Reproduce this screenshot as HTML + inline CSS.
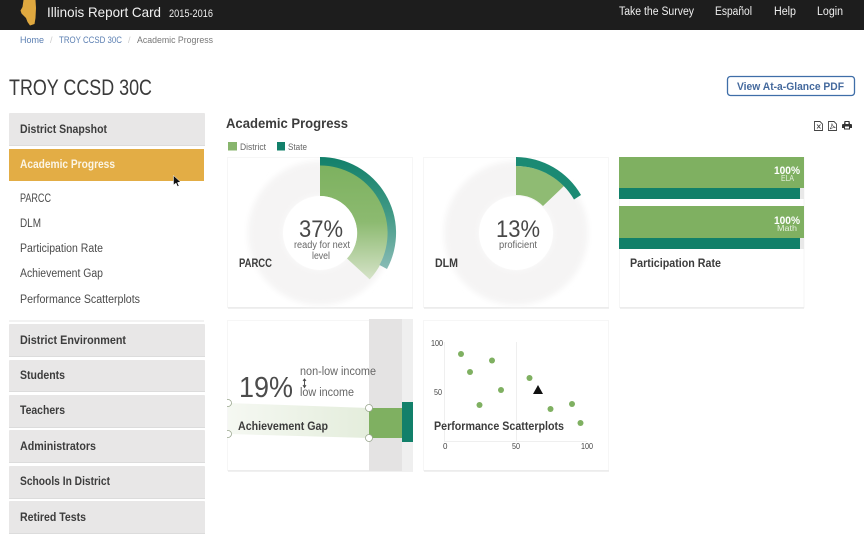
<!DOCTYPE html>
<html>
<head>
<meta charset="utf-8">
<style>
html,body{margin:0;padding:0;background:#fff;width:864px;height:540px;overflow:hidden}
svg{display:block;filter:blur(.3px)}
text{font-family:"Liberation Sans",Arial,sans-serif;fill:#444}
.b{font-weight:700;fill:#3c3c3c}
.s{font-size:11.5px;fill:#4a4a4a}
.n{font-size:11.5px;fill:#efefef}
</style>
</head>
<body>
<svg width="864" height="540" viewBox="0 0 864 540" xmlns="http://www.w3.org/2000/svg">
<defs>
<linearGradient id="g1" gradientUnits="userSpaceOnUse" x1="0" y1="165" x2="0" y2="278"><stop offset="0" stop-color="#7db15f"/><stop offset=".5" stop-color="#8cba70"/><stop offset="1" stop-color="#d4e2c6"/></linearGradient>
<linearGradient id="g2" gradientUnits="userSpaceOnUse" x1="0" y1="157" x2="0" y2="272"><stop offset="0" stop-color="#12806a"/><stop offset=".5" stop-color="#429a86"/><stop offset="1" stop-color="#8dbdb8"/></linearGradient>
<linearGradient id="g3" x1="0" x2="1" y1="0" y2="0"><stop offset="0" stop-color="#f5f8f2"/><stop offset="1" stop-color="#e4eddc"/></linearGradient>
<filter id="soft" x="-20%" y="-20%" width="140%" height="140%"><feGaussianBlur stdDeviation="3"/></filter>
</defs>

<!-- Header -->
<rect width="864" height="30" fill="#1d1d1d"/>
<path d="M23.500 0H35.500L36 8L35.500 18L34.500 24L30 25.500L27.500 22L26 18L21.500 13.500L20.500 10.500L22.500 7Z" fill="#dfa83f"/>
<text x="47" y="17" font-size="14" style="fill:#f2f2f2" textLength="114" lengthAdjust="spacingAndGlyphs">Illinois Report Card</text>
<text x="169" y="17" font-size="11" style="fill:#eee" textLength="44" lengthAdjust="spacingAndGlyphs">2015-2016</text>
<text class="n" x="619" y="15" textLength="75" lengthAdjust="spacingAndGlyphs">Take the Survey</text>
<text class="n" x="715" y="15" textLength="37" lengthAdjust="spacingAndGlyphs">Español</text>
<text class="n" x="774" y="15" textLength="22" lengthAdjust="spacingAndGlyphs">Help</text>
<text class="n" x="817" y="15" textLength="26" lengthAdjust="spacingAndGlyphs">Login</text>

<!-- Breadcrumb -->
<text x="20" y="43" font-size="9.500" style="fill:#5b7fb2" textLength="24" lengthAdjust="spacingAndGlyphs">Home</text>
<text x="50" y="43" font-size="9" style="fill:#ccc">/</text>
<text x="59" y="43" font-size="9.500" style="fill:#5b7fb2" textLength="63" lengthAdjust="spacingAndGlyphs">TROY CCSD 30C</text>
<text x="128" y="43" font-size="9" style="fill:#ccc">/</text>
<text x="137" y="43" font-size="9.500" style="fill:#777" textLength="76" lengthAdjust="spacingAndGlyphs">Academic Progress</text>

<!-- Title -->
<text x="9" y="95" font-size="22" style="fill:#3a3a3a" textLength="143" lengthAdjust="spacingAndGlyphs">TROY CCSD 30C</text>
<rect x="727.500" y="76.500" width="127" height="19" rx="3" fill="#fff" stroke="#3f6ea8" stroke-width="1.300"/>
<text x="737" y="90" font-size="11" font-weight="700" style="fill:#44699d" textLength="107" lengthAdjust="spacingAndGlyphs">View At-a-Glance PDF</text>

<!-- Sidebar -->
<g fill="#e8e7e7">
<rect x="9" y="113" width="196" height="33" rx="1"/>
<rect x="9" y="324" width="196" height="33" rx="1"/>
<rect x="9" y="360" width="196" height="32" rx="1"/>
<rect x="9" y="395" width="196" height="33" rx="1"/>
<rect x="9" y="430" width="196" height="33" rx="1"/>
<rect x="9" y="466" width="196" height="33" rx="1"/>
<rect x="9" y="501" width="196" height="33" rx="1"/>
</g>
<g stroke="#dcdcdc">
<line x1="9" y1="145.500" x2="205" y2="145.500"/>
<line x1="9" y1="356.500" x2="205" y2="356.500"/>
<line x1="9" y1="391.500" x2="205" y2="391.500"/>
<line x1="9" y1="427.500" x2="205" y2="427.500"/>
<line x1="9" y1="462.500" x2="205" y2="462.500"/>
<line x1="9" y1="498.500" x2="205" y2="498.500"/>
<line x1="9" y1="533.500" x2="205" y2="533.500"/>
</g>
<rect x="9" y="149" width="195" height="32" fill="#e3ad45"/>
<line x1="9" y1="321" x2="204" y2="321" stroke="#e6e6e6"/>
<g font-size="11.500">
<text class="b" x="20" y="133" textLength="87" lengthAdjust="spacingAndGlyphs">District Snapshot</text>
<text x="20" y="168" font-weight="700" style="fill:#fbf5e6" textLength="95" lengthAdjust="spacingAndGlyphs">Academic Progress</text>
<text class="s" x="20" y="202" textLength="31" lengthAdjust="spacingAndGlyphs">PARCC</text>
<text class="s" x="20" y="227" textLength="21" lengthAdjust="spacingAndGlyphs">DLM</text>
<text class="s" x="20" y="252" textLength="83" lengthAdjust="spacingAndGlyphs">Participation Rate</text>
<text class="s" x="20" y="277" textLength="83" lengthAdjust="spacingAndGlyphs">Achievement Gap</text>
<text class="s" x="20" y="303" textLength="120" lengthAdjust="spacingAndGlyphs">Performance Scatterplots</text>
<text class="b" x="20" y="344" textLength="106" lengthAdjust="spacingAndGlyphs">District Environment</text>
<text class="b" x="20" y="379" textLength="45" lengthAdjust="spacingAndGlyphs">Students</text>
<text class="b" x="20" y="414" textLength="45" lengthAdjust="spacingAndGlyphs">Teachers</text>
<text class="b" x="20" y="450" textLength="76" lengthAdjust="spacingAndGlyphs">Administrators</text>
<text class="b" x="20" y="485" textLength="90" lengthAdjust="spacingAndGlyphs">Schools In District</text>
<text class="b" x="20" y="521" textLength="66" lengthAdjust="spacingAndGlyphs">Retired Tests</text>
</g>
<!-- Cursor -->
<path d="M173.500 175.500V185L176 183L177.500 186.500L179 186L177.500 182.500L180.500 182Z" fill="#111" stroke="#fff" stroke-width=".5"/>

<!-- Section heading -->
<text class="b" x="226" y="128" font-size="14" textLength="122" lengthAdjust="spacingAndGlyphs">Academic Progress</text>
<rect x="228" y="142" width="9" height="8.500" fill="#88b56d"/>
<text x="240" y="150" font-size="9.500" style="fill:#666" textLength="26" lengthAdjust="spacingAndGlyphs">District</text>
<rect x="277" y="142" width="8" height="8.500" fill="#12806a"/>
<text x="288" y="150" font-size="9.500" style="fill:#666" textLength="19" lengthAdjust="spacingAndGlyphs">State</text>

<!-- Toolbar icons -->
<g fill="none" stroke="#444" stroke-width=".9">
<path d="M814.500 121.500H820L822.500 124V130.500H814.500Z"/>
<path d="M828.500 121.500H834L836.500 124V130.500H828.500Z"/>
<path d="M817 124.500L820.500 128.500M820.500 124.500L817 128.500"/>
<path d="M830 129C831.500 127 832 125 831.800 123.500C832.500 126 833.500 127 835.500 127.500C833 127.500 831.500 128 830 129Z" stroke-width=".6"/>
</g>
<path d="M844.500 121H849.500L850 124H851.500L852 125V128H850V129.500H844V128H842V125L842.500 124H844ZM845.500 122V124H848.500V122ZM845 126.500V128.500H849V126.500Z" fill="#333" fill-rule="evenodd"/>

<!-- Cards -->
<g fill="#fff" stroke="#f6f6f6">
<rect x="227.500" y="157.500" width="185" height="150"/>
<rect x="423.500" y="157.500" width="185" height="150"/>
<rect x="619.500" y="157.500" width="184.500" height="150"/>
<rect x="227.500" y="320.500" width="185" height="150"/>
<rect x="423.500" y="320.500" width="185" height="150"/>
</g>
<g stroke="#e2e2e2">
<line x1="228" y1="308" x2="413" y2="308"/>
<line x1="424" y1="308" x2="609" y2="308"/>
<line x1="620" y1="308" x2="804" y2="308"/>
<line x1="228" y1="471" x2="413" y2="471"/>
<line x1="424" y1="471" x2="609" y2="471"/>
</g>

<!-- PARCC donut -->
<circle cx="320" cy="233" r="54" fill="none" stroke="#f5f4f4" stroke-width="36" filter="url(#soft)"/>
<path d="M320 165A68 68 0 0 1 369.700 279.400L347 258.500A37 37 0 0 0 320 196Z" fill="url(#g1)"/>
<path d="M320 157A76 76 0 0 1 387 269L379.500 265A67.500 67.500 0 0 0 320 165.500Z" fill="url(#g2)"/>
<circle cx="320" cy="233" r="37" fill="#fff"/>
<text x="299" y="237" font-size="24" style="fill:#484848" textLength="44" lengthAdjust="spacingAndGlyphs">37%</text>
<text x="294" y="248" font-size="10" style="fill:#666" textLength="56" lengthAdjust="spacingAndGlyphs">ready for next</text>
<text x="312" y="259" font-size="10" style="fill:#666" textLength="18" lengthAdjust="spacingAndGlyphs">level</text>
<text class="b" x="239" y="267" font-size="11.500" textLength="33" lengthAdjust="spacingAndGlyphs">PARCC</text>

<!-- DLM donut -->
<circle cx="516" cy="233" r="54" fill="none" stroke="#f5f4f4" stroke-width="36" filter="url(#soft)"/>
<path d="M516 166A67 67 0 0 1 564 186L543 206A38 38 0 0 0 516 195Z" fill="#8fbb73"/>
<path d="M516 157A76 76 0 0 1 581 195L574 199.500A67 67 0 0 0 516 166Z" fill="#1b8a73"/>
<circle cx="516" cy="233" r="37" fill="#fff"/>
<text x="496" y="237" font-size="24" style="fill:#484848" textLength="44" lengthAdjust="spacingAndGlyphs">13%</text>
<text x="499" y="248" font-size="10" style="fill:#666" textLength="38" lengthAdjust="spacingAndGlyphs">proficient</text>
<text class="b" x="435" y="267" font-size="11.500" textLength="23" lengthAdjust="spacingAndGlyphs">DLM</text>

<!-- Participation Rate -->
<rect x="619" y="157" width="185" height="31" fill="#7fb061"/>
<rect x="619" y="188" width="181" height="11" fill="#118069"/>
<rect x="800" y="188" width="4" height="11" fill="#e9e9e9"/>
<rect x="619" y="206" width="185" height="32" fill="#7fb061"/>
<rect x="619" y="238" width="181" height="11" fill="#118069"/>
<rect x="800" y="238" width="4" height="11" fill="#e9e9e9"/>
<text x="774" y="174" font-size="11" font-weight="700" style="fill:#fff" textLength="26" lengthAdjust="spacingAndGlyphs">100%</text>
<text x="781" y="181" font-size="8" style="fill:#e6f0de" textLength="13" lengthAdjust="spacingAndGlyphs">ELA</text>
<text x="774" y="224" font-size="11" font-weight="700" style="fill:#fff" textLength="26" lengthAdjust="spacingAndGlyphs">100%</text>
<text x="777" y="231" font-size="8" style="fill:#e6f0de" textLength="20" lengthAdjust="spacingAndGlyphs">Math</text>
<text class="b" x="630" y="267" font-size="11.500" textLength="91" lengthAdjust="spacingAndGlyphs">Participation Rate</text>

<!-- Achievement Gap -->
<rect x="369" y="319" width="33" height="152" fill="#e4e3e3"/>
<rect x="402" y="319" width="11" height="152" fill="#efefef"/>
<path d="M228 403L369 408V438L228 434Z" fill="url(#g3)"/>
<rect x="369" y="408" width="33" height="30" fill="#7fb061"/>
<rect x="402" y="402" width="11" height="40" fill="#12806a"/>
<g fill="#fff" stroke="#9aa78f" stroke-width=".8">
<circle cx="228" cy="403" r="3.500"/><circle cx="228" cy="434" r="3.500"/>
<circle cx="369" cy="408" r="3.500"/><circle cx="369" cy="438" r="3.500"/>
</g>
<rect x="220" y="398" width="7" height="41" fill="#fff"/>
<text x="239" y="397" font-size="29" style="fill:#4c4c4c" textLength="54" lengthAdjust="spacingAndGlyphs">19%</text>
<text x="300" y="375" font-size="11.500" style="fill:#666" textLength="76" lengthAdjust="spacingAndGlyphs">non-low income</text>
<text x="300" y="396" font-size="11.500" style="fill:#666" textLength="54" lengthAdjust="spacingAndGlyphs">low income</text>
<path d="M304.500 379.500V386.500M303 381L304.500 379L306 381M303 385L304.500 387.500L306 385" fill="none" stroke="#444" stroke-width=".9"/>
<text class="b" x="238" y="430" font-size="11.500" textLength="90" lengthAdjust="spacingAndGlyphs">Achievement Gap</text>

<!-- Scatterplot -->
<path d="M444.500 342V441.500H587M516.500 342V441.500" fill="none" stroke="#efefef"/>
<g font-size="8" style="fill:#666">
<text x="431" y="346" textLength="12" lengthAdjust="spacingAndGlyphs">100</text>
<text x="434" y="395" textLength="8" lengthAdjust="spacingAndGlyphs">50</text>
<text x="443" y="449" textLength="4">0</text>
<text x="512" y="449" textLength="8" lengthAdjust="spacingAndGlyphs">50</text>
<text x="581" y="449" textLength="12" lengthAdjust="spacingAndGlyphs">100</text>
</g>
<g fill="#7fb061">
<circle cx="461" cy="354" r="3"/><circle cx="492" cy="360.500" r="3"/>
<circle cx="470" cy="372" r="3"/><circle cx="529.500" cy="378" r="3"/>
<circle cx="501" cy="390" r="3"/><circle cx="479.500" cy="405" r="3"/>
<circle cx="550.500" cy="409" r="3"/><circle cx="572" cy="404" r="3"/>
<circle cx="580.500" cy="423" r="3"/>
</g>
<path d="M538 385L543 394H533Z" fill="#111"/>
<text class="b" x="434" y="430" font-size="11.500" textLength="130" lengthAdjust="spacingAndGlyphs">Performance Scatterplots</text>
</svg>
</body>
</html>
